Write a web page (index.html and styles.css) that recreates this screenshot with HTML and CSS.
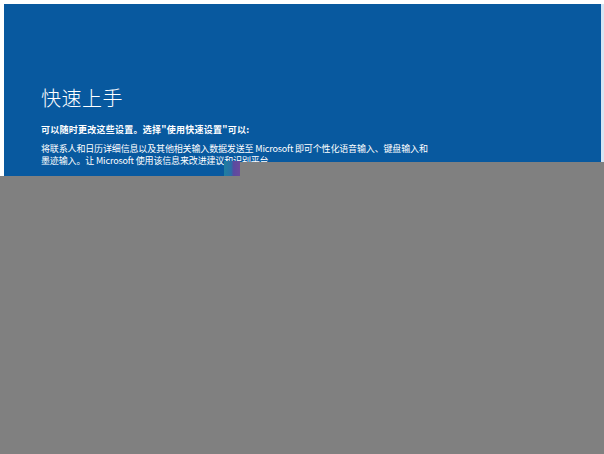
FILE: index.html
```html
<!DOCTYPE html>
<html lang="zh-CN">
<head>
<meta charset="utf-8">
<link rel="stylesheet" href="styles.css">
</head>
<body>
<div class="screen">
  <div class="panel">
    <h1 class="title">快速上手</h1>
    <p class="lead">可以随时更改这些设置。选择"使用快速设置"可以:</p>
    <p class="body">将联系人和日历详细信息以及其他相关输入数据发送至 Microsoft 即可个性化语音输入、键盘输入和<br>墨迹输入。让 Microsoft 使用该信息来改进建议和识别平台。</p>
  </div>
  <div class="edge"></div>
</div>
<div class="dim-main"></div>
<div class="dim-notch"></div>
<div class="glitch"></div>
</body>
</html>
```
FILE: styles.css
```css
html, body {
  margin: 0;
  padding: 0;
  background: #ffffff;
  width: 604px;
  height: 454px;
  overflow: hidden;
  font-family: "Noto Sans CJK SC", "Noto Sans", sans-serif;
}
.screen {
  display: flex;
  padding: 4px 0 0 4px;
  height: 172px;
}
.panel {
  flex: 1;
  background: #08599f;
  color: #ffffff;
  padding: 80px 0 0 37px;
  box-sizing: border-box;
  overflow: hidden;
}
.edge {
  width: 3px;
  background: #d6e6f4;
}
.title {
  margin: 0;
  font-size: 20px;
  font-weight: 300;
  line-height: 28px;
  letter-spacing: 0.5px;
}
.lead {
  margin: 12px 0 0 0;
  font-size: 9px;
  font-weight: 700;
  line-height: 12px;
  letter-spacing: 0.25px;
}
.body {
  margin: 7px 0 0 0;
  font-size: 9px;
  line-height: 12px;
  letter-spacing: -0.15px;
}
.dim-main {
  position: absolute;
  left: 0;
  top: 176px;
  width: 604px;
  height: 278px;
  background: #808080;
}
.dim-notch {
  position: absolute;
  left: 240px;
  top: 162px;
  width: 364px;
  height: 14px;
  background: #808080;
}
.glitch {
  position: absolute;
  left: 224px;
  top: 161px;
  width: 16px;
  height: 15px;
  background: linear-gradient(90deg, #1f7fa0 0%, #2a6fa6 45%, #5a4aa0 60%, #6a4a9c 100%);
}
```
